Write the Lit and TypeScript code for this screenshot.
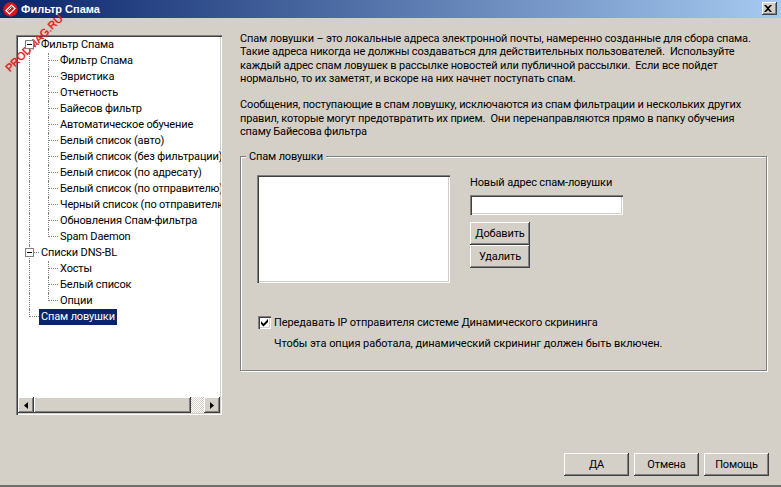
import { LitElement, html, css } from "lit";
import { customElement } from "lit/decorators.js";

type Node = { t: string; lvl: number; last?: boolean; box?: boolean; sel?: boolean };

const tree: Node[] = [
  { t: "Фильтр Спама", lvl: 0, box: true },
  ...[
    "Фильтр Спама", "Эвристика", "Отчетность", "Байесов фильтр", "Автоматическое обучение",
    "Белый список (авто)", "Белый список (без фильтрации)", "Белый список (по адресату)",
    "Белый список (по отправителю)", "Черный список (по отправителю)", "Обновления Спам-фильтра",
  ].map((t) => ({ t, lvl: 1 })),
  { t: "Spam Daemon", lvl: 1, last: true },
  { t: "Списки DNS-BL", lvl: 0, box: true },
  { t: "Хосты", lvl: 1 },
  { t: "Белый список", lvl: 1 },
  { t: "Опции", lvl: 1, last: true },
  { t: "Спам ловушки", lvl: 0, last: true, sel: true },
];

@customElement("app-root")
export class AppRoot extends LitElement {
  static styles = css`
    :host {
      display: block; width: 781px; height: 487px; position: relative; overflow: hidden;
      background: #d4d0c8; color: #000;
      font: 11px/13px Roboto, "Liberation Sans", sans-serif;
    }
    * { box-sizing: border-box; }
    .window { display: flex; flex-direction: column; height: 485px; }
    .shadow { height: 2px; background: #6f6d68; }
    .title {
      height: 18px; flex: none; display: flex; align-items: center; padding: 0 4px 0 3px;
      background: linear-gradient(90deg, #0a246a 0%, #a6caf0 100%);
      color: #fff; font: bold 11px "Liberation Sans", sans-serif;
    }
    .title svg { flex: none; margin-right: 3px; }
    .title span { flex: 1; }
    .close {
      width: 15px; height: 13px; margin-bottom: 1px; background: #d4d0c8; display: flex; align-items: center; justify-content: center;
      box-shadow: inset -1px -1px #404040, inset 1px 1px #fff, inset -2px -2px #808080;
    }
    .main { flex: 1; display: flex; padding: 17px 14px 0 16px; gap: 18px; min-height: 0; }
    .treebox {
      width: 206px; height: 380px; flex: none; background: #fff; display: flex; flex-direction: column;
      box-shadow: inset 1px 1px #808080, inset 2px 2px #404040, inset -1px -1px #fff, inset -2px -2px #d4d0c8;
      padding: 2px;
    }
    .rows { flex: 1; overflow: hidden; margin-right: -1px; }
    .row { height: 16px; display: flex; align-items: center; white-space: nowrap; }
    .cell { width: 19px; height: 16px; flex: none; position: relative; }
    .cell.first { width: 21px; }
    .v::before { content: ""; position: absolute; left: 9px; top: 0; bottom: 0; border-left: 1px dotted #808080; }
    .v.half::before { bottom: 8px; }
    .v.lower::before { top: 8px; }
    .h::after { content: ""; position: absolute; left: 9px; top: 7px; width: 10px; border-top: 1px dotted #808080; }
    .first.v::before { left: 11px; }
    .first.h::after { left: 11px; width: 10px; }
    .box {
      position: absolute; left: 7px; top: 3px; width: 9px; height: 9px; background: #fff; z-index: 1;
      border: 1px solid #808080;
    }
    .box::before { content: ""; position: absolute; left: 1px; top: 3px; width: 5px; height: 1px; background: #000; }
    .label { padding: 0 2px; height: 16px; line-height: 16px; letter-spacing: -0.15px; }
    .sel { background: #0a246a; color: #fff; }
    .hscroll { height: 16px; flex: none; display: flex; background: #d4d0c8; }
    .sb {
      width: 16px; flex: none; background: #d4d0c8; display: flex; align-items: center; justify-content: center;
      box-shadow: inset -1px -1px #404040, inset 1px 1px #fff, inset -2px -2px #808080;
    }
    .thumb { flex: 1; background: #d4d0c8; box-shadow: inset -1px -1px #404040, inset 1px 1px #fff, inset -2px -2px #808080; }
    .track { width: 13px; flex: none; background: repeating-conic-gradient(#fff 0 25%, #d4d0c8 0 50%) 0 0 / 2px 2px; }
    .content { flex: 1; min-width: 0; display: flex; flex-direction: column; margin-top: -3px; letter-spacing: -0.15px; }
    .para { margin: 0 0 13px; line-height: 13.33px; white-space: pre; }
    .group {
      margin-top: 5px; height: 215px; width: 527px; position: relative;
      border: 1px solid #808080; box-shadow: inset 1px 1px #fff, 1px 1px #fff;
      padding: 18px 16px 0;
    }
    .legend { position: absolute; left: 5px; top: -7px; background: #d4d0c8; padding: 0 3px; }
    .top { display: flex; gap: 20px; }
    .list {
      width: 193px; height: 108px; flex: none; background: #fff;
      box-shadow: inset 1px 1px #808080, inset 2px 2px #404040, inset -1px -1px #fff, inset -2px -2px #d4d0c8;
    }
    .form { display: flex; flex-direction: column; align-items: flex-start; }
    .form label { height: 20px; padding-top: 1px; }
    .input {
      width: 153px; height: 20px; background: #fff;
      box-shadow: inset 1px 1px #808080, inset 2px 2px #404040, inset -1px -1px #fff, inset -2px -2px #d4d0c8;
    }
    .btn {
      background: #d4d0c8; display: flex; align-items: center; justify-content: center;
      box-shadow: inset -1px -1px #404040, inset 1px 1px #fff, inset -2px -2px #808080;
    }
    .sm { width: 60px; height: 23px; }
    .first-btn { margin-top: 7px; }
    .opt { margin-top: 33px; display: flex; align-items: center; gap: 3px; padding-left: 1px; height: 13px; letter-spacing: -0.1px; }
    .check {
      width: 13px; height: 13px; flex: none; background: #fff; display: flex; align-items: center; justify-content: center;
      box-shadow: inset 1px 1px #808080, inset 2px 2px #404040, inset -1px -1px #fff, inset -2px -2px #d4d0c8;
    }
    .note { margin: 8px 0 0 17px; letter-spacing: -0.05px; }
    .footer { display: flex; justify-content: flex-end; gap: 5px; padding: 0 12px 9px 0; flex: none; letter-spacing: -0.15px; }
    .foot { width: 65px; height: 23px; }
    .mark {
      position: absolute; left: -4px; top: 37px; transform: rotate(-45deg); color: #e0201c;
      font: 11px "Liberation Sans", sans-serif; white-space: nowrap;
      text-shadow: 0 0 1px #e0201c;
    }
  `;

  private row(n: Node, i: number) {
    const cls = n.lvl === 0 ? (n.last ? "v half h" : i === 0 ? "v lower h" : "v h") : "v";
    return html`<div class="row">
      <span class="cell first ${cls}">${n.box ? html`<span class="box"></span>` : ""}</span>
      ${n.lvl === 1 ? html`<span class="cell h v ${n.last ? "half" : ""}"></span>` : ""}
      <span class="label ${n.sel ? "sel" : ""}">${n.t}</span>
    </div>`;
  }

  render() {
    return html`
      <div class="window">
        <div class="title">
          <svg width="15" height="15" viewBox="0 0 15 15">
            <circle cx="7.5" cy="7.5" r="7.2" fill="#d8151c" />
            <path d="M3 8.5 8.5 3l3.5 3.5L6.5 12z" fill="none" stroke="#fff" stroke-width="1.2" />
            <path d="M5.5 8.5l3-3" stroke="#fff" />
          </svg>
          <span>Фильтр Спама</span>
          <div class="close">
            <svg width="8" height="7" viewBox="0 0 8 7"><path d="M0 0h2l2 2 2-2h2L5 3.5 8 7H6L4 5 2 7H0l3-3.5z" /></svg>
          </div>
        </div>
        <div class="main">
          <div class="treebox">
            <div class="rows">${tree.map((n, i) => this.row(n, i))}</div>
            <div class="hscroll">
              <div class="sb"><svg width="4" height="7" viewBox="0 0 4 7"><path d="M4 0v7L0 3.5z" /></svg></div>
              <div class="thumb"></div>
              <div class="track"></div>
              <div class="sb"><svg width="4" height="7" viewBox="0 0 4 7"><path d="M0 0v7l4-3.5z" /></svg></div>
            </div>
          </div>
          <div class="content">
            <p class="para">Спам ловушки – это локальные адреса электронной почты, намеренно созданные для сбора спама.
Такие адреса никогда не должны создаваться для действительных пользователей.  Используйте
каждый адрес спам ловушек в рассылке новостей или публичной рассылки.  Если все пойдет
нормально, то их заметят, и вскоре на них начнет поступать спам.</p>
            <p class="para">Сообщения, поступающие в спам ловушку, исключаются из спам фильтрации и нескольких других
правил, которые могут предотвратить их прием.  Они перенаправляются прямо в папку обучения
спаму Байесова фильтра</p>
            <div class="group">
              <span class="legend">Спам ловушки</span>
              <div class="top">
                <div class="list"></div>
                <div class="form">
                  <label>Новый адрес спам-ловушки</label>
                  <div class="input"></div>
                  <div class="btn sm first-btn">Добавить</div>
                  <div class="btn sm">Удалить</div>
                </div>
              </div>
              <div class="opt">
                <span class="check"><svg width="9" height="9" viewBox="0 0 9 9"><path d="M1 3.2l2.5 2.5L8 1v3L3.5 8.5 1 6z" /></svg></span>
                <span>Передавать IP отправителя системе Динамического скрининга</span>
              </div>
              <div class="note">Чтобы эта опция работала, динамический скрининг должен быть включен.</div>
            </div>
          </div>
        </div>
        <div class="footer">
          <div class="btn foot">ДА</div>
          <div class="btn foot">Отмена</div>
          <div class="btn foot">Помощь</div>
        </div>
      </div>
      <div class="shadow"></div>
      <span class="mark">PRODMAG.RU</span>
    `;
  }
}
